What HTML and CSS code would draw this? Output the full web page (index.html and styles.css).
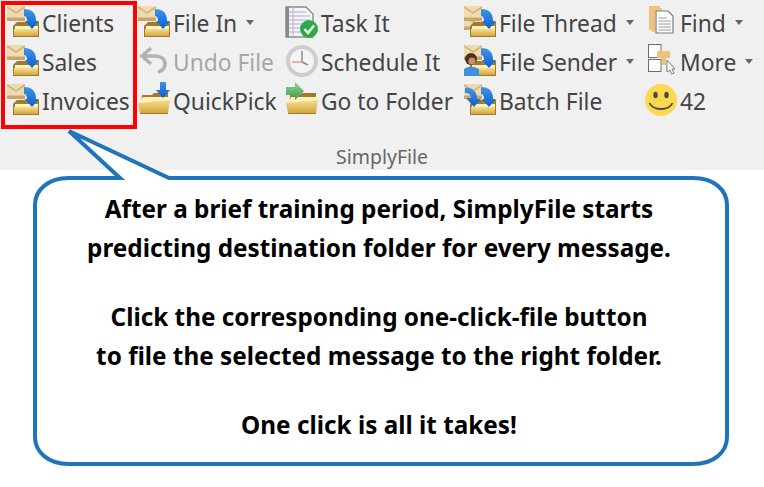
FILE: index.html
```html
<!DOCTYPE html>
<html lang="en">
<head>
    <meta charset="UTF-8">
    <meta name="viewport" content="width=device-width, initial-scale=1.0">
    <title>SimplyFile</title>
    <link rel="stylesheet" href="styles.css">
</head>
<body>
    <svg class="defs" width="0" height="0">
        <defs>
            <linearGradient id="folderFill" x1="0" y1="0" x2="0" y2="1">
                <stop offset="0" stop-color="#f6dd8f"/>
                <stop offset="1" stop-color="#d5a63f"/>
            </linearGradient>
            <linearGradient id="blueFill" x1="0" y1="0" x2="0" y2="1">
                <stop offset="0" stop-color="#3f95e6"/>
                <stop offset="1" stop-color="#0a5fd0"/>
            </linearGradient>
            <linearGradient id="greenFill" x1="0" y1="0" x2="0" y2="1">
                <stop offset="0" stop-color="#8fd08f"/>
                <stop offset="1" stop-color="#3c9f55"/>
            </linearGradient>
            <symbol id="envelope" viewBox="0 0 32 32">
                <rect x="0" y="0" width="18" height="15" fill="#c9a56c"/>
                <rect x="0" y="0" width="18" height="11.5" fill="#efdcae"/>
                <path d="M0 1 L9 7 L18 1" fill="none" stroke="#d3b57c" stroke-width="1.6"/>
            </symbol>
            <symbol id="folder" viewBox="0 0 32 32">
                <path d="M6 20 L10 16 L32 16 L32 31 L6 31 Z" fill="#a27a2e"/>
                <rect x="8" y="20" width="23" height="3" fill="#fdf1bd"/>
                <rect x="7" y="23" width="24" height="7" fill="url(#folderFill)"/>
            </symbol>
            <symbol id="downArrow" viewBox="0 0 32 32">
                <path d="M17 3 C25 3 29 7 29 15 L32 15 L25 23 L18 15 L20 15 C20 12 19 10 17 10 Z" fill="url(#blueFill)"/>
            </symbol>
            <symbol id="fileIcon" viewBox="0 0 32 32">
                <use href="#envelope"/>
                <use href="#folder"/>
                <use href="#downArrow"/>
            </symbol>
            <symbol id="openFolder" viewBox="0 0 32 32">
                <path d="M4 11 L14 11 L16 9 L30 9 L30 30 L2 30 Z" fill="#a27a2e"/>
                <path d="M5 13 L31 13 L29 19 L1 19 Z" fill="#fdf0bb"/>
                <path d="M0 19 L32 16 L30 29 L2 29 Z" fill="url(#folderFill)"/>
            </symbol>
        </defs>
    </svg>

    <div class="ribbon">
        <div class="groups">
            <div class="col col-quick">
                <div class="item"><svg class="icon"><use href="#fileIcon"/></svg>Clients</div>
                <div class="item"><svg class="icon"><use href="#fileIcon"/></svg>Sales</div>
                <div class="item"><svg class="icon"><use href="#fileIcon"/></svg>Invoices</div>
            </div>
            <div class="col col-file">
                <div class="item"><svg class="icon"><use href="#fileIcon"/></svg>File In<span class="caret"></span></div>
                <div class="item disabled">
                    <svg class="icon" viewBox="0 0 32 32">
                        <path d="M13 3 L4 11 L13 19 M4 11 L17 11 C23 11 27 14 27 19 C27 24 24 26 20 27" fill="none" stroke="#b3b3b3" stroke-width="3.6"/>
                    </svg>Undo File</div>
                <div class="item">
                    <svg class="icon" viewBox="0 0 32 32">
                        <use href="#openFolder"/>
                        <path d="M22 -2 L28 -2 L28 6 L32 6 L25 14 L18 6 L22 6 Z" fill="url(#blueFill)"/>
                    </svg>QuickPick</div>
            </div>
            <div class="col col-task">
                <div class="item">
                    <svg class="icon" viewBox="0 0 32 32">
                        <path d="M0 1 L20 1 L27 8 L27 31 L0 31 Z" fill="#f3f5fa" stroke="#8a8a8a" stroke-width="1.4"/>
                        <rect x="0" y="1" width="3" height="30" fill="#8a8a8a"/>
                        <path d="M3 6 H20 M3 10 H24 M3 14 H24 M3 18 H24 M3 22 H24 M3 26 H24" stroke="#9fb4d8" stroke-width="1.2"/>
                        <path d="M7 1 V31" stroke="#e2a9a0" stroke-width="1"/>
                        <circle cx="23" cy="23" r="9" fill="#2fa84a"/>
                        <path d="M18.5 23 L22 27 L28 19.5" fill="none" stroke="#e8f6e8" stroke-width="2.6"/>
                    </svg>Task It</div>
                <div class="item">
                    <svg class="icon" viewBox="0 0 32 32">
                        <circle cx="16" cy="16" r="14" fill="#f4f4f4" stroke="#cdcdcd" stroke-width="4"/>
                        <path d="M16 6 V17" stroke="#8a8a8a" stroke-width="1.5"/>
                        <path d="M6 17 H16" stroke="#eda793" stroke-width="1.8"/>
                        <path d="M16 17 L22 20" stroke="#8a8a8a" stroke-width="1.5"/>
                    </svg>Schedule It</div>
                <div class="item">
                    <svg class="icon" viewBox="0 0 32 32">
                        <use href="#openFolder"/>
                        <path d="M9 -2 L18 7 L9 16 L9 11 L0 11 L0 3 L9 3 Z" fill="url(#greenFill)"/>
                    </svg>Go to Folder</div>
            </div>
            <div class="col col-thread">
                <div class="item">
                    <svg class="icon" viewBox="0 0 32 32">
                        <g transform="translate(0 9)"><use href="#envelope" width="32" height="32"/></g>
                        <use href="#envelope"/>
                        <use href="#folder"/>
                        <use href="#downArrow"/>
                    </svg>File Thread<span class="caret"></span></div>
                <div class="item">
                    <svg class="icon" viewBox="0 0 32 32">
                        <use href="#envelope"/>
                        <use href="#folder"/>
                        <use href="#downArrow"/>
                        <circle cx="7" cy="14" r="6" fill="#4a2f20"/>
                        <circle cx="8" cy="16" r="3.6" fill="#c98d68"/>
                        <path d="M0 31 L0 24 Q7 19 15 24 L15 31 Z" fill="#3f8fe0"/>
                    </svg>File Sender<span class="caret"></span></div>
                <div class="item">
                    <svg class="icon" viewBox="0 0 32 32">
                        <use href="#envelope"/>
                        <use href="#folder"/>
                        <path d="M1 4 C8 3 13 7 13 15 L17 15 L10 23 L2 14 L7 14 C7 11 5 9 1 9 Z" fill="url(#blueFill)"/>
                        <use href="#downArrow"/>
                    </svg>Batch File</div>
            </div>
            <div class="col col-more">
                <div class="item">
                    <svg class="icon" viewBox="0 0 32 32">
                        <path d="M4 0 H15 V3 H7 V24 H4 Z M7 2 H17 V5 H10 V26 H7 Z" fill="#efc377"/>
                        <path d="M11 5 H23 L28 10 V27 H11 Z" fill="#fdfdfd" stroke="#7d7d7d" stroke-width="1.2"/>
                        <path d="M13.5 12 H22 M13.5 15 H26 M13.5 18 H26 M13.5 21 H26 M13.5 24 H26" stroke="#9c9c9c" stroke-width="1"/>
                    </svg>Find<span class="caret"></span></div>
                <div class="item">
                    <svg class="icon" viewBox="0 0 32 32">
                        <rect x="3.5" y="-0.5" width="12.5" height="13" fill="#fff" stroke="#6c6c6c"/>
                        <rect x="3.5" y="14.5" width="12.5" height="12" fill="#fff" stroke="#6c6c6c"/>
                        <path d="M12 6 H25 V13 H21 V20 H17 V13 H12 Z" fill="#ecc27f"/>
                        <path d="M22 15 L30 24 L27 24 L29 28 L26.5 29 L25 25 L22 27 Z" fill="#fff" stroke="#7a7a7a"/>
                    </svg>More<span class="caret"></span></div>
                <div class="item">
                    <svg class="icon" viewBox="0 0 32 32">
                        <circle cx="16" cy="16" r="16" fill="#ffd84d"/>
                        <ellipse cx="10.5" cy="11" rx="2.2" ry="3.2" fill="#4a4a4a"/>
                        <ellipse cx="21.5" cy="11" rx="2.2" ry="3.2" fill="#4a4a4a"/>
                        <path d="M4.5 19 C8 27 24 27 27.5 19" fill="none" stroke="#4a4a4a" stroke-width="1.8"/>
                    </svg>42</div>
            </div>
        </div>
        <div class="group-name">SimplyFile</div>
    </div>

    <div class="highlight"></div>

    <div class="callout">
        <svg class="callout-shape" width="764" height="487" viewBox="0 0 764 487">
            <path d="M69 131 L169 178 L693 178 C714 178 727 190 727 205 L727 437 C727 452 714 464 693 464 L69 464 C48 464 35 452 35 437 L35 205 C35 190 48 178 69 178 L120 178 Z" fill="#fff" stroke="#1f74bb" stroke-width="4"/>
        </svg>
        <div class="callout-text">
            <p>After a brief training period, SimplyFile starts<br>predicting destination folder for every message.</p>
            <p>Click the corresponding one-click-file button<br>to file the selected message to the right folder.</p>
            <p>One click is all it takes!</p>
        </div>
    </div>
</body>
</html>
```

FILE: styles.css
```css
body {
    margin: 0;
    height: 487px;
    overflow: hidden;
    background-color: #ffffff;
    font-family: "Noto Sans", Arial, sans-serif;
}
.defs {
    display: block;
    height: 0;
}
.ribbon {
    height: 170px;
    background-color: #f0f0f0;
    color: #444444;
    display: flex;
    flex-direction: column;
    justify-content: space-between;
    box-sizing: border-box;
    padding: 4px 0 0 7px;
}
.groups {
    display: flex;
}
.col-quick {
    width: 131px;
}
.col-file {
    width: 148px;
}
.col-task {
    width: 178px;
}
.col-thread {
    width: 181px;
}
.item {
    display: flex;
    align-items: center;
    height: 39px;
    font-size: 22.8px;
    white-space: nowrap;
}
.item.disabled {
    color: #a6a6a6;
}
.icon {
    width: 32px;
    height: 32px;
    margin: 2px 3px 0 0;
    align-self: flex-start;
    flex-shrink: 0;
    overflow: visible;
}
.caret {
    width: 0;
    height: 0;
    margin-left: 9px;
    margin-bottom: 3px;
    border-top: 5px solid #666666;
    border-left: 4px solid transparent;
    border-right: 4px solid transparent;
}
.group-name {
    font-size: 19.5px;
    color: #666666;
    text-align: center;
    width: 764px;
    margin-left: -7px;
}
.highlight {
    position: absolute;
    left: 1px;
    top: 1px;
    width: 128px;
    height: 120px;
    border: 4px solid #ff0000;
}
.callout {
    position: absolute;
    left: 0;
    top: 0;
    width: 764px;
    height: 487px;
}
.callout-shape {
    position: absolute;
    left: 0;
    top: 0;
}
.callout-text {
    position: absolute;
    left: 33px;
    top: 189px;
    width: 692px;
    text-align: center;
    font-size: 24.3px;
    line-height: 39px;
    font-weight: bold;
    color: #000000;
}
.callout-text p {
    margin: 0 0 30px;
}
```
